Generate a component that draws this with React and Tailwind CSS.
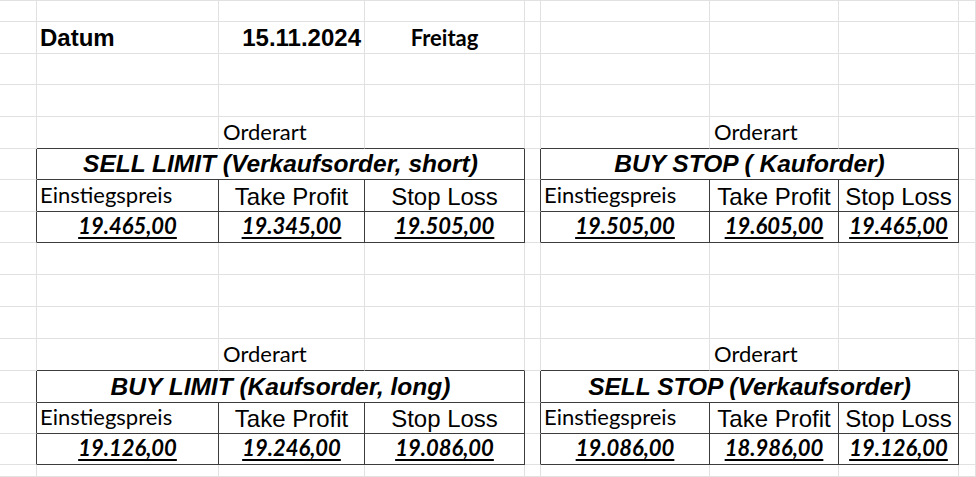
const arial = "font-['Liberation_Sans',Arial,sans-serif]"
const calibri = "font-['Lato','Noto_Sans',sans-serif]"

const orders = [
  [
    { title: 'SELL LIMIT (Verkaufsorder, short)', values: ['19.465,00', '19.345,00', '19.505,00'] },
    { title: 'BUY STOP ( Kauforder)', values: ['19.505,00', '19.605,00', '19.465,00'] },
  ],
  [
    { title: 'BUY LIMIT (Kaufsorder, long)', values: ['19.126,00', '19.246,00', '19.086,00'] },
    { title: 'SELL STOP (Verkaufsorder)', values: ['19.086,00', '18.986,00', '19.126,00'] },
  ],
]

function Cell({ children, className = '', r, b }) {
  return (
    <div
      className={`flex min-w-0 items-end overflow-visible whitespace-nowrap border-r border-b border-[#e1e1e1] leading-none text-black ${
        r ? 'border-r-[#3c3c3c]' : ''
      } ${b ? 'border-b-[#3c3c3c]' : ''} ${className}`}
    >
      {children}
    </div>
  )
}

function EmptyRow() {
  return Array.from({ length: 9 }, (_, i) => <Cell key={i} />)
}

function Value({ children }) {
  return (
    <span className={`${calibri} text-[22px] font-bold italic underline decoration-2 underline-offset-[3px]`}>{children}</span>
  )
}

function Header({ left, right }) {
  return [left, right].map((order, i) => {
    const first = i === 0
    return [
      <Cell key={`a${i}`} r />,
      <Cell key={`e${i}`} r className={`${calibri} text-[22px] pb-[5px] pl-[3px]`} b>
        Einstiegspreis
      </Cell>,
      <Cell key={`t${i}`} r b className={`${arial} text-[24px] justify-center pb-[2px]`}>
        Take Profit
      </Cell>,
      <Cell key={`s${i}`} r b className={`${arial} text-[24px] justify-center pb-[2px]`}>
        Stop Loss
      </Cell>,
      !first && <Cell key="z" />,
    ]
  })
}

function OrderBlock({ pair }) {
  const [left, right] = pair
  return (
    <>
      <Cell />
      <Cell b />
      <Cell b className={`${calibri} text-[22px] pb-[5px] pl-[4px]`}>Orderart</Cell>
      <Cell b />
      <Cell />
      <Cell b />
      <Cell b className={`${calibri} text-[22px] pb-[5px] pl-[4px]`}>Orderart</Cell>
      <Cell b />
      <Cell />

      <Cell r />
      <Cell r b className={`col-span-3 justify-center pb-[3px] ${arial} text-[24.5px] font-bold italic`}>
        {left.title}
      </Cell>
      <Cell r />
      <Cell r b className={`col-span-3 justify-center pb-[3px] ${arial} text-[24.5px] font-bold italic`}>
        {right.title}
      </Cell>
      <Cell />

      <Header left={left} right={right} />

      {[left, right].map((order, i) => (
        <div key={i} className="contents">
          <Cell r />
          {order.values.map((v) => (
            <Cell key={v + i} r b className="justify-center pb-[5px]">
              <Value>{v}</Value>
            </Cell>
          ))}
        </div>
      ))}
      <Cell />
    </>
  )
}

export default function App() {
  return (
    <div className="h-[477px] w-[976px] overflow-hidden bg-white">
      <div className="grid h-full grid-cols-[37px_182px_146px_160px_16px_169px_129px_120px_1fr] grid-rows-[21px_32px_31px_32px_32px_31px_32px_31px_32px_32px_32px_32px_32px_31px_31px_1fr] border-t border-[#e1e1e1]">
        <EmptyRow />

        <Cell />
        <Cell className={`${arial} text-[24px] font-bold pb-[3px] pl-[3px]`}>Datum</Cell>
        <Cell className={`${arial} text-[24px] font-bold justify-end pb-[3px] pr-[3px]`}>15.11.2024</Cell>
        <Cell className={`${calibri} text-[22px] font-bold justify-center pb-[4px]`}>Freitag</Cell>
        <Cell />
        <Cell />
        <Cell />
        <Cell />
        <Cell />

        <EmptyRow />
        <EmptyRow />

        <OrderBlock pair={orders[0]} />

        <EmptyRow />
        <EmptyRow />
        <EmptyRow />

        <OrderBlock pair={orders[1]} />

        <EmptyRow />
      </div>
    </div>
  )
}
